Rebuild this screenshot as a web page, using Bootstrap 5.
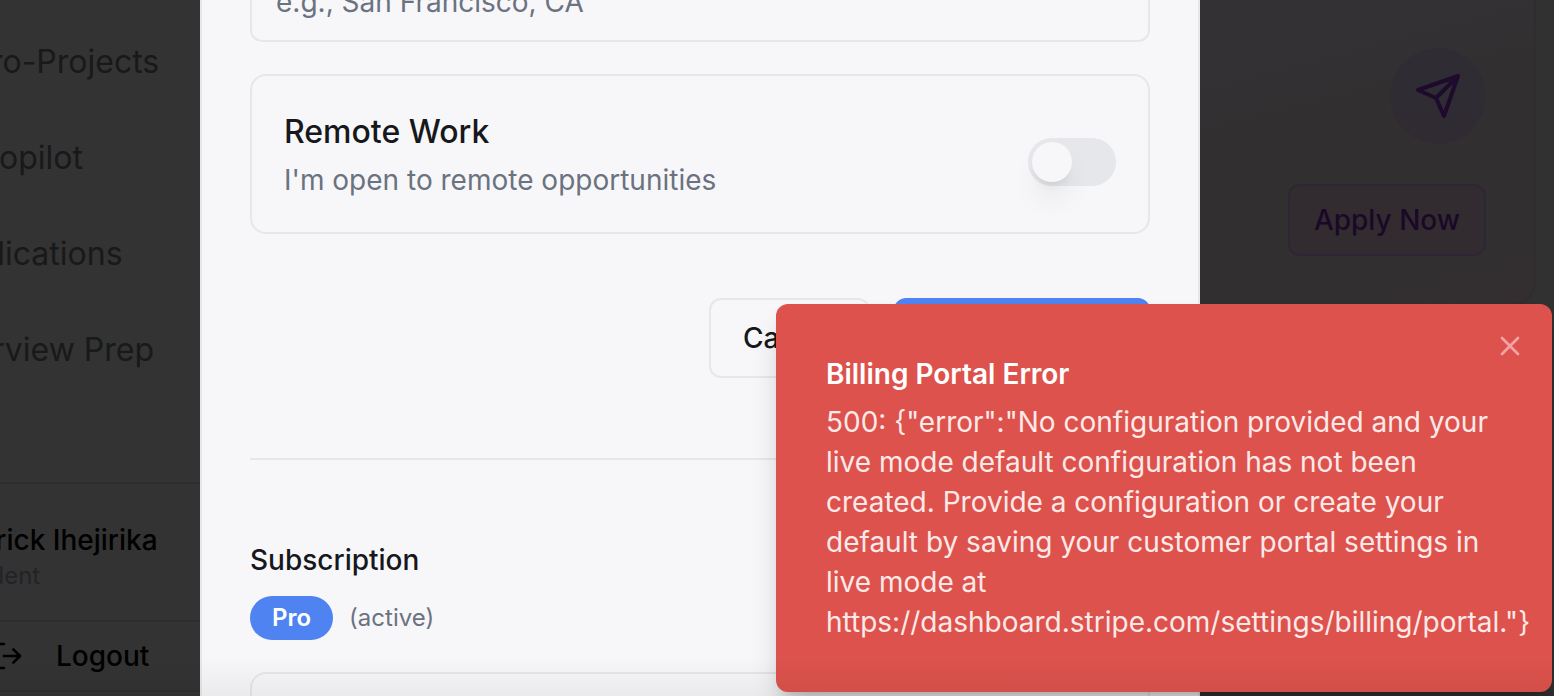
<!DOCTYPE html>
<html lang="en">
<head>
<meta charset="utf-8">
<meta name="viewport" content="width=device-width, initial-scale=1">
<title>Profile settings</title>
<link href="https://cdn.jsdelivr.net/npm/bootstrap@5.3.0/dist/css/bootstrap.min.css" rel="stylesheet">
<style>
  :root { --line: #e5e7e9; --ink: #16181b; --muted-ink: #6b7280; --brand: #4f83f1; --surface: #f7f7fa; }
  body { font-family: Inter, "Liberation Sans", sans-serif; font-size: 28px; line-height: 40px; background: #323132; color: var(--ink); }
  .shell { height: 100vh; }
  .side { width: 200px; background: #333; }
  .side-inner { margin-left: -64px; }
  .side-nav a { font-size: 32px; line-height: 48px; padding: 24px 0; color: #17191a; white-space: nowrap; display: block; }
  .side-nav { padding: 14px 0 84px; }
  .side-user { border-top: 2px solid #2e2e2e; padding: 36px 0 28px 16px; color: #000; white-space: nowrap; }
  .side-user small { display: block; font-size: 24px; line-height: 32px; color: #212327; }
  .side-logout { border-top: 2px solid #2e2e2e; border-bottom: 2px solid #2e2e2e; padding: 14px 0 14px 56px; }
  .side-logout button { font-size: 28px; line-height: 40px; color: #000; gap: 32px; }
  .sheet { min-width: 0; background: var(--surface); border: solid var(--line); border-width: 0 2px; padding: 0 48px; }
  .sheet-body { margin-top: -38px; }
  .field { height: 80px; border: 2px solid var(--line); border-radius: 12px; background: transparent; font-size: 28px; padding: 0 24px; }
  .field::placeholder { color: var(--muted-ink); opacity: 1; }
  .panel { border: 2px solid var(--line); border-radius: 16px; padding: 32px; margin-top: 32px; }
  .panel-title { font-size: 32px; line-height: 48px; }
  .soft { color: var(--muted-ink); }
  .toggle { appearance: none; width: 88px; height: 48px; border-radius: 24px; background: #e5e7eb; padding: 4px; margin: 16px 0 0; flex: none; }
  .toggle::before { content: ""; display: block; width: 40px; height: 40px; border-radius: 50%; background: var(--surface); box-shadow: 0 20px 30px -6px rgba(0,0,0,.1), 0 8px 12px -8px rgba(0,0,0,.14); }
  .act { height: 80px; border: 2px solid var(--line); border-radius: 12px; font-size: 28px; line-height: 40px; padding: 0 32px; color: var(--ink); }
  .act-main { background: var(--brand); border: 0; color: #fff; }
  .rule { border-top: 2px solid var(--line); margin-top: 80px; padding-top: 80px; }
  .plan { background: var(--brand); color: #fff; font-size: 24px; line-height: 32px; padding: 6px 22px; border-radius: 22px; }
  .feed { width: 354px; padding-right: 18px; }
  .feed-card { border: solid #2f2c32; border-width: 0 2px 2px 0; border-radius: 0 0 24px 0; height: 306px; padding: 48px 48px 48px 0;
    background: linear-gradient(165deg, #333134 20%, #312f2f 42%, #312f2f 82%, #342e31); }
  .disc { width: 96px; height: 96px; background: linear-gradient(#2f2c34, #302b32); margin-bottom: 40px; }
  .apply { height: 72px; border: 2px solid #2d2633; border-radius: 12px; background: #322c31; color: #190926; font-size: 28px; padding: 0 24px; }
  .notice { position: absolute; right: 2px; bottom: 4px; width: calc(50% - 1px); background: #dd524c; color: #fff; border-radius: 12px; padding: 50px; box-shadow: 0 20px 30px -6px rgba(0,0,0,.2), 0 8px 12px -8px rgba(0,0,0,.2); z-index: 2; }
  .notice p { color: #fce9e8; margin: 8px -12px 0 0; }
  .notice-close { position: absolute; top: 26px; right: 26px; color: #f1a4a4; }
  .fade-edge { position: absolute; left: 0; right: 0; bottom: 0; height: 40px; background: linear-gradient(transparent, rgba(0,0,0,.05)); pointer-events: none; z-index: 3; }
</style>
</head>
<body>
<div class="shell d-flex position-relative overflow-hidden">
  <aside class="side flex-shrink-0 overflow-hidden">
    <div class="side-inner">
      <nav class="side-nav">
        <a class="text-decoration-none" href="#">Micro-Projects</a>
        <a class="text-decoration-none" href="#">AI Copilot</a>
        <a class="text-decoration-none" href="#">Applications</a>
        <a class="text-decoration-none" href="#">Interview Prep</a>
      </nav>
      <div class="side-user fw-medium">Patrick Ihejirika<small class="fw-normal">Student</small></div>
      <div class="side-logout">
        <button type="button" class="btn p-0 border-0 fw-medium d-flex align-items-center">
          <svg width="32" height="32" viewBox="0 0 24 24" fill="none" stroke="currentColor" stroke-width="2" stroke-linecap="round" stroke-linejoin="round" aria-hidden="true"><path d="M9 21H5a2 2 0 0 1-2-2V5a2 2 0 0 1 2-2h4M16 17l5-5-5-5M21 12H9"/></svg>
          Logout
        </button>
      </div>
    </div>
  </aside>

  <main class="sheet flex-grow-1">
    <form class="sheet-body">
      <input class="field w-100 d-block" type="text" placeholder="e.g., San Francisco, CA" aria-label="Location">
      <div class="panel d-flex align-items-center justify-content-between">
        <div>
          <label class="panel-title fw-medium d-block" for="remote">Remote Work</label>
          <div class="soft mt-1">I'm open to remote opportunities</div>
        </div>
        <input class="toggle" type="checkbox" role="switch" id="remote">
      </div>
      <div class="d-flex justify-content-end gap-4 mt-5 pt-3">
        <button type="button" class="act btn fw-medium">Cancel</button>
        <button type="button" class="act act-main btn fw-medium">Save Changes</button>
      </div>
    </form>
    <section class="rule">
      <div class="fw-medium">Subscription</div>
      <div class="d-flex align-items-center gap-3 mt-3">
        <span class="plan fw-semibold">Pro</span>
        <span class="soft fs-4">(active)</span>
      </div>
      <div class="panel"></div>
    </section>
  </main>

  <section class="feed flex-shrink-0">
    <div class="feed-card d-flex flex-column align-items-end">
      <div class="disc rounded-circle d-flex align-items-center justify-content-center flex-shrink-0">
        <svg width="48" height="48" viewBox="0 0 24 24" fill="none" stroke="#1d0a2c" stroke-width="2" stroke-linecap="round" stroke-linejoin="round" aria-hidden="true"><path d="M22 2 15 22 11 13 2 9ZM22 2 11 13"/></svg>
      </div>
      <button type="button" class="apply btn fw-medium flex-shrink-0">Apply Now</button>
    </div>
  </section>

  <div class="notice" role="alert">
    <div class="fw-semibold">Billing Portal Error</div>
    <p>500: {"error":"No configuration provided and your live mode default configuration has not been created. Provide a configuration or create your default by saving your customer portal settings in live mode at <span class="text-nowrap">https://dashboard.stripe.com/settings/billing/portal."}</span></p>
    <button type="button" class="notice-close btn p-0 border-0 d-flex" aria-label="Close">
      <svg width="32" height="32" viewBox="0 0 24 24" fill="none" stroke="currentColor" stroke-width="2" stroke-linecap="round" aria-hidden="true"><path d="M18 6 6 18M6 6l12 12"/></svg>
    </button>
  </div>
  <div class="fade-edge"></div>
</div>
<script src="https://cdn.jsdelivr.net/npm/bootstrap@5.3.0/dist/js/bootstrap.bundle.min.js"></script>
</body>
</html>
